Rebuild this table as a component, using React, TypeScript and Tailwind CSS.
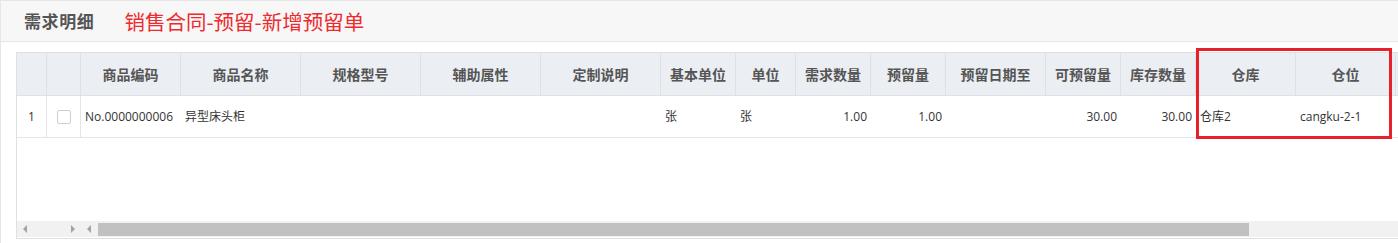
import React from 'react';

type Col = { key: string; title: string; width: string; align: 'left' | 'right' | 'center' };

// column widths include the right border of each cell
const COLUMNS: Col[] = [
    { key: 'code', title: '商品编码', width: 'w-[100px]', align: 'left' },
    { key: 'name', title: '商品名称', width: 'w-[120px]', align: 'left' },
    { key: 'spec', title: '规格型号', width: 'w-[120px]', align: 'left' },
    { key: 'attr', title: '辅助属性', width: 'w-[120px]', align: 'left' },
    { key: 'custom', title: '定制说明', width: 'w-[120px]', align: 'left' },
    { key: 'baseUnit', title: '基本单位', width: 'w-[75px]', align: 'left' },
    { key: 'unit', title: '单位', width: 'w-[60px]', align: 'left' },
    { key: 'qty', title: '需求数量', width: 'w-[75px]', align: 'right' },
    { key: 'reserve', title: '预留量', width: 'w-[75px]', align: 'right' },
    { key: 'until', title: '预留日期至', width: 'w-[100px]', align: 'left' },
    { key: 'avail', title: '可预留量', width: 'w-[75px]', align: 'right' },
    { key: 'stock', title: '库存数量', width: 'w-[75px]', align: 'right' },
    { key: 'warehouse', title: '仓库', width: 'w-[100px]', align: 'left' },
    { key: 'location', title: '仓位', width: 'w-[100px]', align: 'left' },
    { key: 'extra', title: '', width: 'w-[100px]', align: 'left' },
];

const ROWS: Record<string, string>[] = [
    {
        code: 'No.0000000006',
        name: '异型床头柜',
        baseUnit: '张',
        unit: '张',
        qty: '1.00',
        reserve: '1.00',
        avail: '30.00',
        stock: '30.00',
        warehouse: '仓库2',
        location: 'cangku-2-1',
    },
];

const alignClass = (a: Col['align']) =>
    a === 'right' ? 'justify-end' : a === 'center' ? 'justify-center' : 'justify-start';

const Arrow = ({ dir }: { dir: 'left' | 'right' }) => (
    <div className="w-[16px] h-full flex items-center justify-center">
        <svg width="4" height="8" viewBox="0 0 4 8">
            {dir === 'left' ? <path d="M4 0 L0 4 L4 8 Z" fill="#a3a3a3" /> : <path d="M0 0 L4 4 L0 8 Z" fill="#a3a3a3" />}
        </svg>
    </div>
);

export default function App() {
    return (
        <div className="relative w-[1398px] h-[243px] overflow-hidden bg-white border-l border-[#e6e6e6] font-['Open_Sans','Noto_Sans_CJK_SC',sans-serif]">
            {/* panel title bar */}
            <div className="h-[42px] bg-[#f7f7f7] border-t border-b border-[#e6e6e6] flex items-center pl-[23px]">
                <span className="text-[17px] font-bold text-[#555] font-['Noto_Sans_CJK_SC',sans-serif] tracking-[0.6px]">需求明细</span>
                <span className="ml-[30px] text-[20.5px] text-[#ee2a2f] font-['Noto_Sans_CJK_SC',sans-serif]">销售合同-预留-新增预留单</span>
            </div>

            {/* grid */}
            <div className="pl-[15px] pt-[10px]">
                <div className="border-l border-t border-b border-[#dde1e6] w-[1420px]">
                    <div className="flex h-[43px] bg-[#ebeef2] border-b border-[#dde1e6]">
                        <div className="w-[30px] shrink-0 border-r border-[#dde1e6]" />
                        <div className="w-[34px] shrink-0 border-r border-[#dde1e6]" />
                        {COLUMNS.map(c => (
                            <div
                                key={c.key}
                                className={`${c.width} shrink-0 border-r border-[#dde1e6] flex items-center justify-center text-[14px] font-bold text-[#555] font-['Noto_Sans_CJK_SC',sans-serif]`}
                            >
                                {c.title}
                            </div>
                        ))}
                    </div>

                    {ROWS.map((r, i) => (
                        <div key={i} className="flex h-[42px] border-b border-[#e3e6ea] text-[12px] text-[#333]">
                            <div className="w-[30px] shrink-0 border-r border-[#e3e6ea] flex items-center justify-center">{i + 1}</div>
                            <div className="w-[34px] shrink-0 border-r border-[#e3e6ea] flex items-center justify-center">
                                <div className="w-[14px] h-[14px] border border-[#c5d0dc] rounded-[2px] bg-white" />
                            </div>
                            {COLUMNS.map(c => (
                                <div key={c.key} className={`${c.width} shrink-0 px-[4px] flex items-center ${alignClass(c.align)}`}>
                                    {r[c.key] ?? ''}
                                </div>
                            ))}
                        </div>
                    ))}

                    <div className="h-[83px]" />

                    {/* horizontal scrollbar */}
                    <div className="h-[16px] bg-[#f1f1f1] flex items-center mb-[1px]">
                        <Arrow dir="left" />
                        <div className="w-[32px]" />
                        <Arrow dir="right" />
                        <Arrow dir="left" />
                        <div className="ml-[1px] w-[1151px] h-[13px] bg-[#c1c1c1]" />
                    </div>
                </div>
            </div>

            {/* highlight box around warehouse columns */}
            <div className="absolute left-[1195px] top-[48px] w-[196px] h-[91px] border-[3px] border-[#e8202a] pointer-events-none" />
        </div>
    );
}
